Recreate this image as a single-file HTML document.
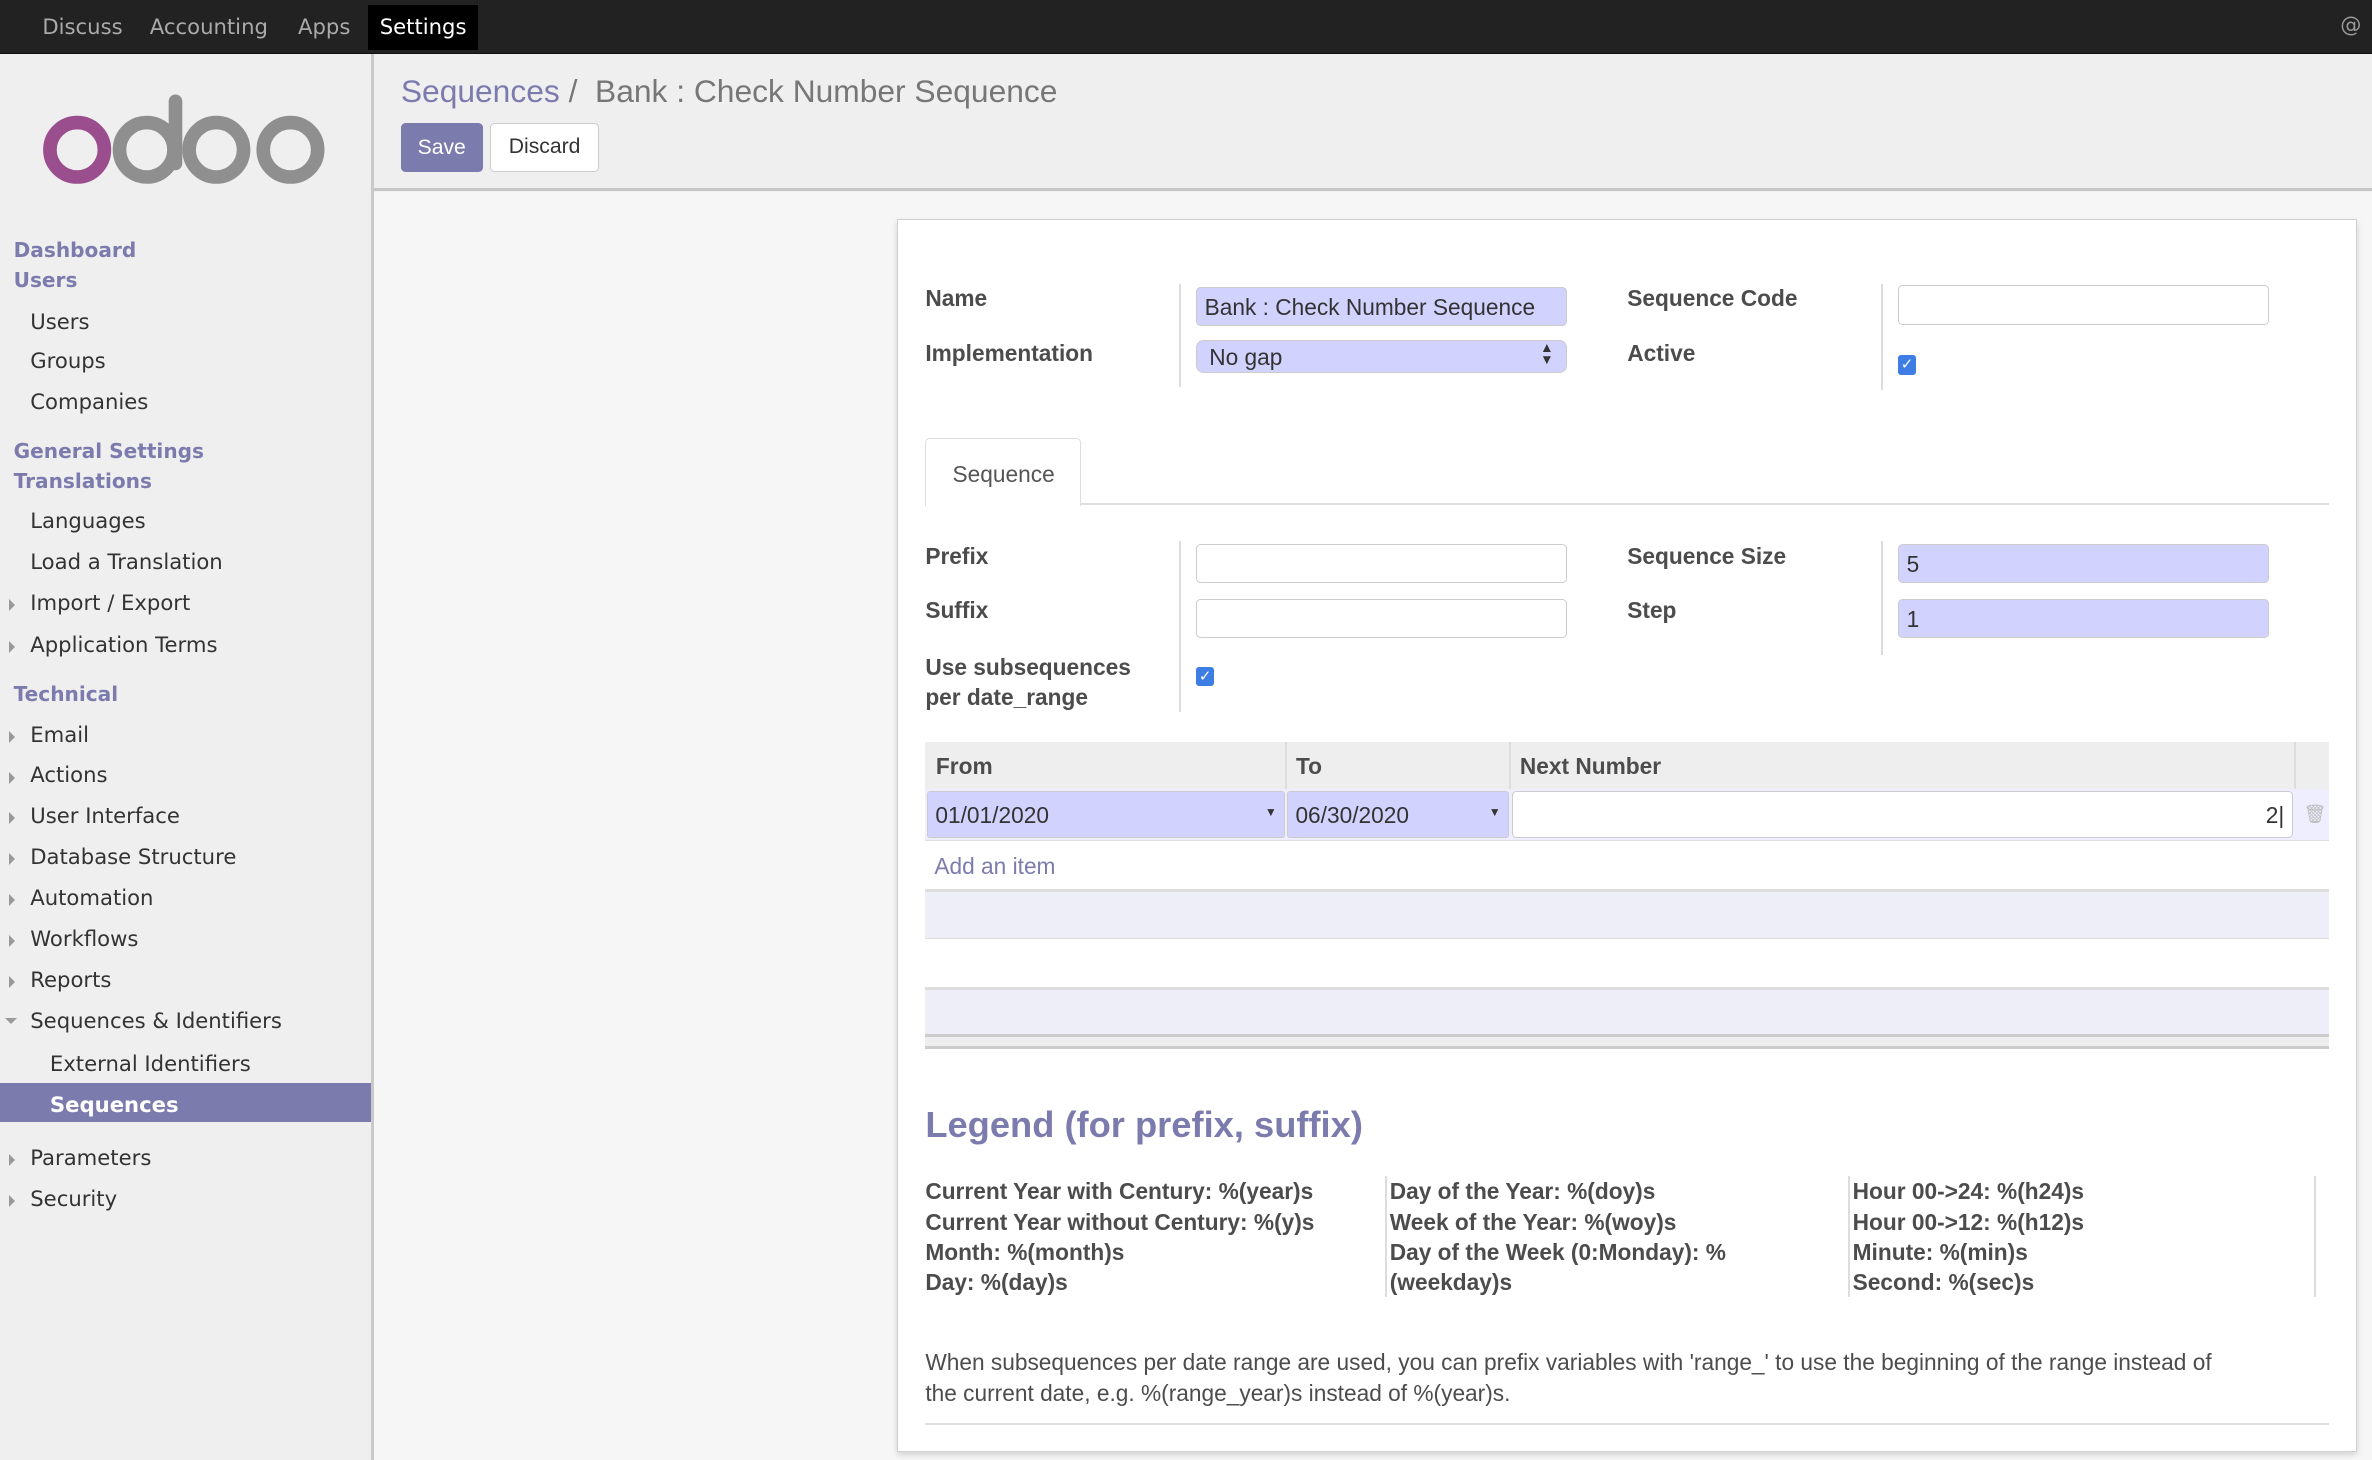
<!DOCTYPE html>
<html><head><meta charset="utf-8"><style>
*{box-sizing:border-box;margin:0;padding:0}
html,body{width:2372px;height:1460px;overflow:hidden;background:#f0eff0}
#z{zoom:1.5128;width:1568px;height:966px;position:relative;font-family:"Liberation Sans",sans-serif;color:#4c4c4c}
.a{position:absolute;white-space:nowrap}
#top{position:absolute;left:0;top:0;width:1568px;height:36px;background:#222;border-bottom:1px solid #111}
#top span{position:absolute;top:9px;color:#aaa;font-family:"DejaVu Sans",sans-serif;font-size:14px;white-space:nowrap}
#side{position:absolute;left:0;top:36px;width:247px;height:930px;background:#f0eff0;border-right:2px solid #c9c9c9;font-family:"DejaVu Sans",sans-serif;font-size:14px;color:#333}
#side div{white-space:nowrap}
#side .h{position:absolute;left:9px;color:#7c7bad;font-weight:bold;font-size:13.3px}
#side .i{position:absolute;left:20px}
#side .t{position:absolute;left:6px;width:0;height:0;border-left:4px solid #999;border-top:4px solid transparent;border-bottom:4px solid transparent;margin-top:5px}
#hdr{position:absolute;left:247px;top:36px;width:1321px;height:90px;background:#f0eff0;border-bottom:2px solid #c6c6c6}
#main{position:absolute;left:247px;top:127px;width:1321px;height:839px;background:#f6f6f6}
#sheet{position:absolute;left:593px;top:145px;width:965px;height:815px;background:#fff;border:1px solid #d0d0d0;box-shadow:0 2px 4px rgba(0,0,0,.15)}
.lbl{position:absolute;font-weight:bold;font-size:15px;color:#4c4c4c;white-space:nowrap}
.in{position:absolute;height:26px;border:1px solid #ccc;border-radius:3px;background:#fff;font-size:15px;padding:4px 5px;color:#333;white-space:nowrap}
.rq{background:#d2d2ff}
.vl{position:absolute;width:1px;background:#ddd}
.cb{position:absolute;width:12px;height:13px;background:#3d7de4;border-radius:2px;color:#fff;font-size:10px;line-height:13px;text-align:center}
.lg{position:absolute;font-size:15px;font-weight:bold;color:#4c4c4c;line-height:20px;white-space:nowrap}
</style></head><body><div id="z">
<div id="top">
<span style="left:28px">Discuss</span><span style="left:99px">Accounting</span><span style="left:197px">Apps</span>
<div style="position:absolute;left:243px;top:3px;width:73px;height:30px;background:#000"></div>
<span style="left:251px;color:#fff">Settings</span>
<span style="left:1547px;top:8px;color:#999">@</span>
</div>
<div id="side">
<svg style="position:absolute;left:0;top:-36px" width="246" height="140">
<circle cx="51" cy="99" r="18" fill="none" stroke="#9b4e8e" stroke-width="9"/>
<circle cx="97" cy="99" r="18" fill="none" stroke="#8f8f8f" stroke-width="9"/>
<line x1="116" y1="67" x2="116" y2="108" stroke="#8f8f8f" stroke-width="9" stroke-linecap="round"/>
<circle cx="143" cy="99" r="18" fill="none" stroke="#8f8f8f" stroke-width="9"/>
<circle cx="192" cy="99" r="18" fill="none" stroke="#8f8f8f" stroke-width="9"/>
</svg>
<div class="h" style="top:121px">Dashboard</div><div class="h" style="top:141px">Users</div>
<div class="i" style="top:168px">Users</div><div class="i" style="top:194px">Groups</div><div class="i" style="top:221px">Companies</div>
<div class="h" style="top:254px">General Settings</div><div class="h" style="top:274px">Translations</div>
<div class="i" style="top:300px">Languages</div><div class="i" style="top:327px">Load a Translation</div>
<div class="t" style="top:355px"></div><div class="i" style="top:354px">Import / Export</div>
<div class="t" style="top:383px"></div><div class="i" style="top:382px">Application Terms</div>
<div class="h" style="top:415px">Technical</div>
<div class="t" style="top:442px"></div><div class="i" style="top:441px">Email</div>
<div class="t" style="top:469px"></div><div class="i" style="top:468px">Actions</div>
<div class="t" style="top:496px"></div><div class="i" style="top:495px">User Interface</div>
<div class="t" style="top:523px"></div><div class="i" style="top:522px">Database Structure</div>
<div class="t" style="top:550px"></div><div class="i" style="top:549px">Automation</div>
<div class="t" style="top:577px"></div><div class="i" style="top:576px">Workflows</div>
<div class="t" style="top:604px"></div><div class="i" style="top:603px">Reports</div>
<div style="position:absolute;left:3px;top:637px;border-top:4px solid #999;border-left:4px solid transparent;border-right:4px solid transparent"></div>
<div class="i" style="top:630px">Sequences &amp; Identifiers</div>
<div class="i" style="top:659px;left:33px">External Identifiers</div>
<div style="position:absolute;left:0;top:680px;width:245px;height:26px;background:#7c7bad"></div>
<div class="i" style="top:686px;left:33px;color:#fff;font-weight:bold">Sequences</div>
<div class="t" style="top:722px"></div><div class="i" style="top:721px">Parameters</div>
<div class="t" style="top:749px"></div><div class="i" style="top:748px">Security</div>
</div>
<div id="hdr">
<div class="a" style="left:18px;top:12px;font-size:21px;color:#7c7bad">Sequences <span style="color:#777">/ &nbsp;Bank : Check Number Sequence</span></div>
<div class="a" style="left:18px;top:45px;width:54px;height:33px;background:#7c7bad;border-radius:3px;color:#fff;font-size:14px;text-align:center;line-height:33px">Save</div>
<div class="a" style="left:77px;top:45px;width:72px;height:33px;background:#fff;border:1px solid #ccc;border-radius:3px;font-size:14px;color:#333;text-align:center;line-height:31px">Discard</div>
</div>
<div id="main"></div>
<div id="sheet">
<div style="position:absolute;left:-593px;top:-145px;width:1568px;height:966px">
<div class="lbl" style="left:611px;top:188px">Name</div>
<div class="lbl" style="left:611px;top:224px">Implementation</div>
<div class="vl" style="left:779px;top:187px;height:68px"></div>
<div class="in rq" style="left:790px;top:189px;width:245px;height:26px">Bank : Check Number Sequence</div>
<div class="in rq" style="left:790px;top:224px;width:245px;height:22px;padding:2px 8px;border-radius:5px">No gap<span style="position:absolute;right:8px;top:1px;font-size:9px;line-height:8px">▲<br>▼</span></div>
<div class="lbl" style="left:1075px;top:188px">Sequence Code</div>
<div class="lbl" style="left:1075px;top:224px">Active</div>
<div class="vl" style="left:1243px;top:187px;height:70px"></div>
<div class="in" style="left:1254px;top:188px;width:245px;height:26px"></div>
<div class="cb" style="left:1254px;top:234px">✓</div>
<div style="position:absolute;left:611px;top:332px;width:928px;height:1px;background:#ddd"></div>
<div style="position:absolute;left:611px;top:289px;width:103px;height:45px;background:#fff;border:1px solid #ddd;border-bottom:none;border-radius:3px 3px 0 0"></div>
<div class="a" style="left:629px;top:304px;font-size:15px;color:#555">Sequence</div>
<div class="lbl" style="left:611px;top:358px">Prefix</div>
<div class="lbl" style="left:611px;top:394px">Suffix</div>
<div class="lbl" style="left:611px;top:430px;line-height:20px">Use subsequences<br>per date_range</div>
<div class="vl" style="left:779px;top:357px;height:113px"></div>
<div class="in" style="left:790px;top:359px;width:245px"></div>
<div class="in" style="left:790px;top:395px;width:245px"></div>
<div class="cb" style="left:790px;top:440px">✓</div>
<div class="lbl" style="left:1075px;top:358px">Sequence Size</div>
<div class="lbl" style="left:1075px;top:394px">Step</div>
<div class="vl" style="left:1243px;top:357px;height:75px"></div>
<div class="in rq" style="left:1254px;top:359px;width:245px">5</div>
<div class="in rq" style="left:1254px;top:395px;width:245px">1</div>
<div style="position:absolute;left:611px;top:490px;width:928px;height:31px;background:#eee"></div>
<div class="vl" style="left:849px;top:490px;height:31px"></div><div class="vl" style="left:997px;top:490px;height:31px"></div><div class="vl" style="left:1516px;top:490px;height:31px"></div>
<div class="lbl" style="left:618px;top:497px">From</div><div class="lbl" style="left:856px;top:497px">To</div><div class="lbl" style="left:1004px;top:497px">Next Number</div>
<div style="position:absolute;left:611px;top:521px;width:928px;height:34px;background:#eef;border-bottom:1px solid #ddd"></div>
<div class="in rq" style="left:612px;top:522px;width:237px;height:31px;padding-top:7px;border-radius:2px">01/01/2020<span style="position:absolute;right:5px;top:9px;font-size:8px">▼</span></div>
<div class="in rq" style="left:850px;top:522px;width:147px;height:31px;padding-top:7px;border-radius:2px">06/30/2020<span style="position:absolute;right:5px;top:9px;font-size:8px">▼</span></div>
<div class="in" style="left:999px;top:522px;width:516px;height:31px;padding-top:7px;text-align:right">2|</div>
<div class="a" style="left:1522px;top:531px;font-size:12px;color:#bbb">🗑</div>
<div class="a" style="left:617px;top:563px;font-size:15px;color:#7c7bad">Add an item</div>
<div style="position:absolute;left:611px;top:587px;width:928px;height:33px;background:#eeeef8;border-top:2px solid #ddd;border-bottom:1px solid #ddd"></div>
<div style="position:absolute;left:611px;top:652px;width:928px;height:33px;background:#eeeef8;border-top:2px solid #ddd;border-bottom:2px solid #ccc"></div>
<div style="position:absolute;left:611px;top:685px;width:928px;height:8px;background:#eee;border-bottom:2px solid #ccc"></div>
<div class="a" style="left:611px;top:729px;font-size:24px;font-weight:bold;color:#7c7bad">Legend (for prefix, suffix)</div>
<div class="lg" style="left:611px;top:777px">Current Year with Century: %(year)s<br>Current Year without Century: %(y)s<br>Month: %(month)s<br>Day: %(day)s</div>
<div class="vl" style="left:915px;top:777px;height:80px"></div>
<div class="lg" style="left:918px;top:777px">Day of the Year: %(doy)s<br>Week of the Year: %(woy)s<br>Day of the Week (0:Monday): %<br>(weekday)s</div>
<div class="vl" style="left:1221px;top:777px;height:80px"></div>
<div class="lg" style="left:1224px;top:777px">Hour 00-&gt;24: %(h24)s<br>Hour 00-&gt;12: %(h12)s<br>Minute: %(min)s<br>Second: %(sec)s</div>
<div class="vl" style="left:1529px;top:777px;height:80px"></div>
<div class="a" style="left:611px;top:890px;font-size:15px;line-height:20px;color:#4c4c4c">When subsequences per date range are used, you can prefix variables with 'range_' to use the beginning of the range instead of<br>the current date, e.g. %(range_year)s instead of %(year)s.</div>
<div style="position:absolute;left:611px;top:940px;width:928px;height:1px;background:#ddd"></div>
</div></div>
</div></body></html>
